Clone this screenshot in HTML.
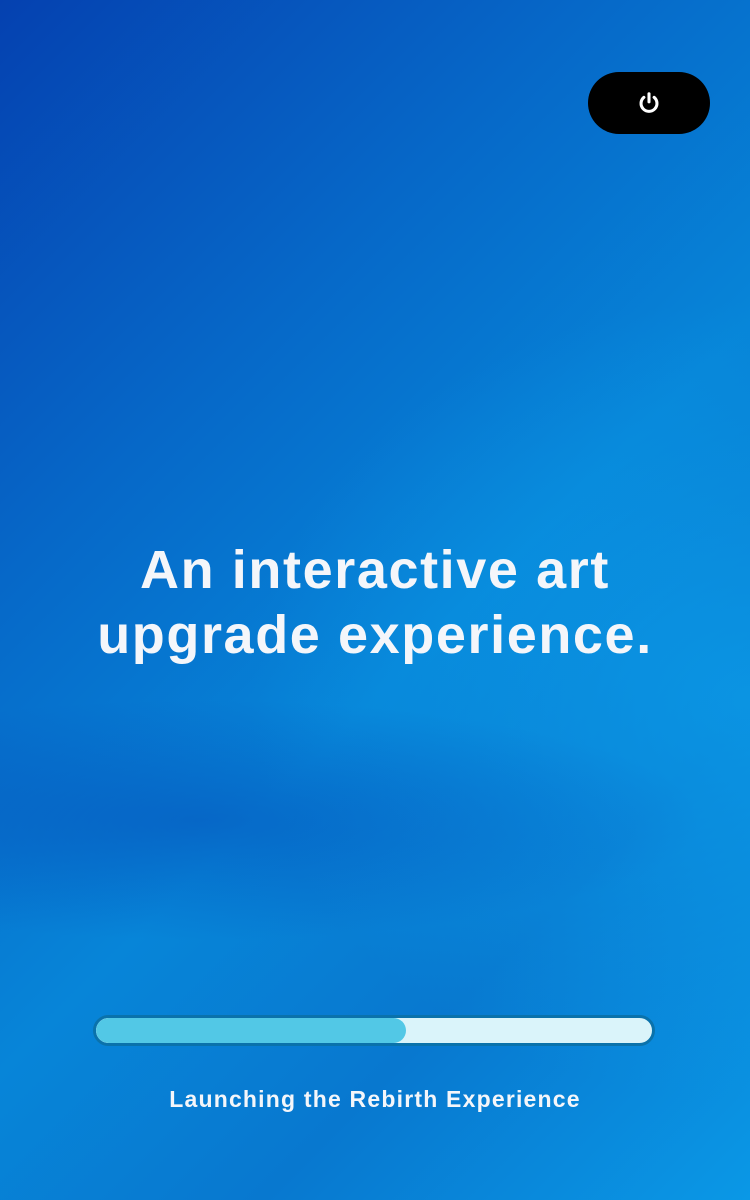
<!DOCTYPE html>
<html><head><style>
html,body{margin:0;padding:0}
body{width:750px;height:1200px;position:relative;overflow:hidden;font-family:"Liberation Sans",sans-serif;
background:
radial-gradient(ellipse 500px 120px at 200px 820px, rgba(5,70,180,0.45), rgba(5,70,180,0) 100%),
radial-gradient(ellipse 500px 400px at 750px 700px, rgba(12,160,235,0.7), rgba(12,160,235,0) 100%),
linear-gradient(135deg,#0541b0 0%,#0668c8 30%,#0785d8 55%,#0878cf 75%,#0a98e6 100%);}
.btn{position:absolute;left:588px;top:72px;width:122px;height:62px;border-radius:31px;background:#000}
.btn svg{position:absolute;left:49px;top:19px}
h1{position:absolute;left:0;width:750px;top:538px;margin:0;text-align:center;color:#f4f6fa;font-weight:bold;font-size:54px;line-height:65px;letter-spacing:1.6px}
.bar{position:absolute;left:93px;top:1015px;width:556px;height:25px;border:3px solid #0a72ab;border-radius:16px;background:#daf4fa;overflow:hidden}
.fill{position:absolute;left:0;top:0;height:100%;width:310px;background:#52c8e6;border-radius:13px}
.lab{position:absolute;left:0;width:750px;top:1086px;text-align:center;color:#f4f6fa;font-weight:bold;font-size:23px;letter-spacing:1.2px}
</style></head><body>
<div class="btn"><svg width="24" height="24" viewBox="0 0 22 22"><path d="M6.3 5.8A7.3 7.3 0 1 0 15.7 5.8" fill="none" stroke="#fff" stroke-width="2.8" stroke-linecap="round"/><path d="M11 2.5V10" stroke="#fff" stroke-width="2.8" stroke-linecap="round"/></svg></div>
<h1>An interactive art<br>upgrade experience.</h1>
<div class="bar"><div class="fill"></div></div>
<div class="lab">Launching the Rebirth Experience</div>
</body></html>
